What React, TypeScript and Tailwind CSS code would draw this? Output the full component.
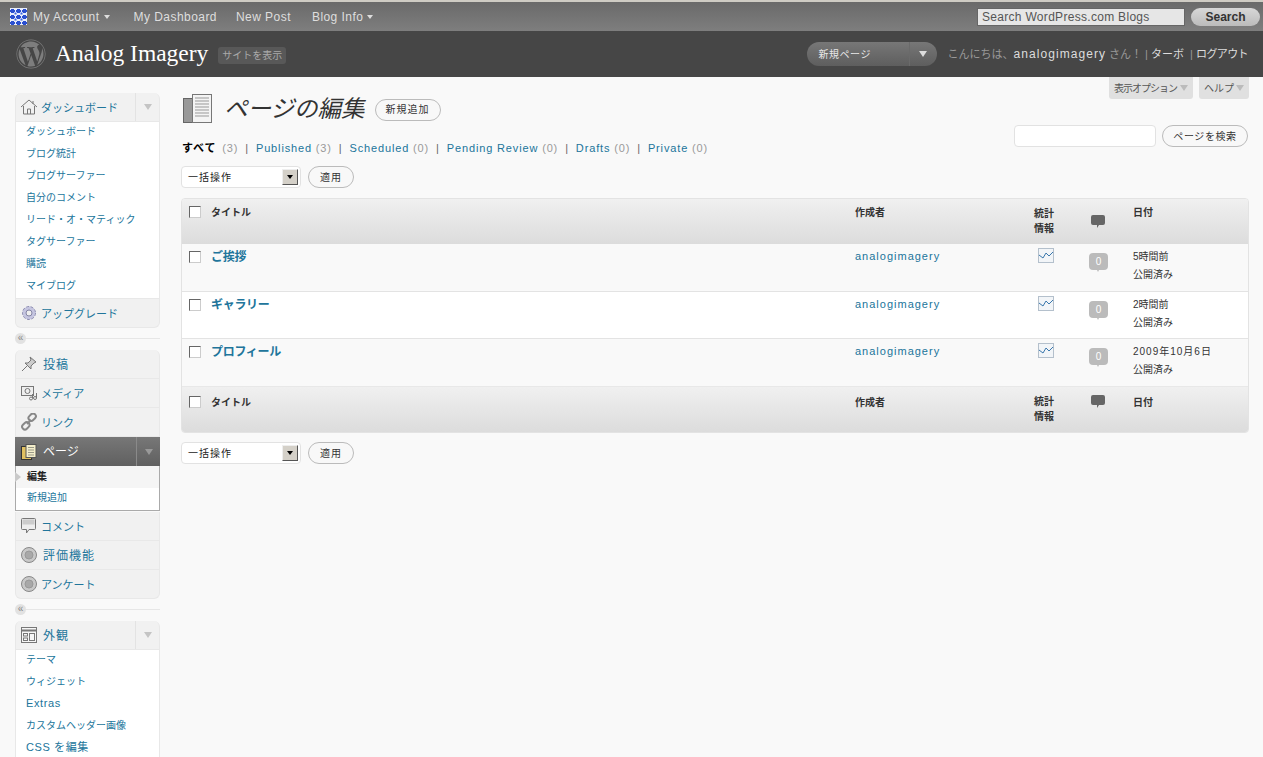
import React from 'react';
import { FaWordpress } from 'react-icons/fa';

const FONT = '"Liberation Sans", "Noto Sans CJK JP", sans-serif';

const Arrow = ({ className = '', small }: { className?: string; small?: boolean }) => (
  <span className={`inline-block w-0 h-0 border-x-transparent ${small ? 'border-x-[3px] border-t-[4px]' : 'border-x-[4px] border-t-[6px]'} ${className}`} />
);

const Gravatar = () => (
  <svg width="17" height="17" viewBox="0 0 17 17" className="shrink-0">
    <rect width="17" height="17" fill="#e8edfb" />
    {[0, 6, 12].map(x => [0, 6, 12].map(y => (
      <path key={`${x}-${y}`} d={`M${x + 1} ${y + 1}h3v1h1v2h-1v1h-3v-1h-1v-2h1z`} fill="#2a4fd0" />
    )))}
    {[3, 9].map(x => [3, 9].map(y => <rect key={`${x}-${y}`} x={x + 1.500} y={y + 1.500} width="2" height="2" fill="#3a62e0" />))}
  </svg>
);

const HomeIcon = () => (
  <svg width="18" height="16" viewBox="0 0 18 16" fill="none" stroke="#777">
    <path d="M1 8 9 1l8 7M3.500 7v8h11V7M7.500 15v-5h3v5M13 2v3" />
  </svg>
);
const GearIcon = () => (
  <svg width="16" height="16" viewBox="0 0 16 16">
    <circle cx="8" cy="8" r="6.500" fill="#c5c5e0" stroke="#8d8db0" strokeDasharray="3 1.500" />
    <circle cx="8" cy="8" r="3" fill="#eee" stroke="#8585a5" />
  </svg>
);
const PinIcon = () => (
  <svg width="16" height="16" viewBox="0 0 16 16" fill="#ccc" stroke="#777">
    <path d="M9 1l6 5-2 1-3 3 0 3-6-6 3 0 3-3zM6 10l-5 5" />
  </svg>
);
const MediaIcon = () => (
  <svg width="16" height="16" viewBox="0 0 16 16" fill="none" stroke="#777">
    <rect x="0.500" y="1.500" width="12" height="9" fill="#eee" />
    <circle cx="6.500" cy="6" r="2.500" />
    <circle cx="10" cy="13.500" r="1.500" />
    <circle cx="14" cy="13" r="1.500" />
    <path d="M11.500 13V9M15.500 13V8" />
  </svg>
);
const LinkIcon = () => (
  <svg width="18" height="18" viewBox="0 0 18 18" fill="none" stroke="#888" strokeWidth="2">
    <rect x="8" y="1.500" width="8" height="5.500" rx="2.700" transform="rotate(-45 12 4)" />
    <rect x="2" y="10" width="8" height="5.500" rx="2.700" transform="rotate(-45 6 13)" />
    <path d="M7 11l4-4" />
  </svg>
);
const PagesIcon = () => (
  <svg width="16" height="16" viewBox="0 0 16 16">
    <rect x="0.500" y="2.500" width="10" height="13" fill="#e0c060" stroke="#333" />
    <rect x="5" y="0.500" width="10" height="13" fill="#f4eecb" stroke="#555" />
    <path d="M7 3.500h6M7 6h6M7 8.500h6M7 11h6" stroke="#998" />
  </svg>
);
const CommentIcon = () => (
  <svg width="15" height="16" viewBox="0 0 15 16">
    <path d="M1.500.500h12a1 1 0 0 1 1 1v9a1 1 0 0 1-1 1H8l-2.500 3.500v-3.500h-4a1 1 0 0 1-1-1v-9a1 1 0 0 1 1-1z" fill="#eee" stroke="#777" />
    <rect x="1.500" y="1.500" width="12" height="5" fill="#ccc" />
  </svg>
);
const DiscIcon = () => (
  <svg width="16" height="16" viewBox="0 0 16 16">
    <circle cx="8" cy="8" r="7.500" fill="#c8c8c8" stroke="#888" />
    <circle cx="8" cy="8" r="4" fill="#a8a8a8" stroke="#999" />
  </svg>
);
const AppearanceIcon = () => (
  <svg width="16" height="16" viewBox="0 0 16 16" fill="none" stroke="#777">
    <rect x="0.500" y="0.500" width="15" height="15" fill="#f6f6f6" />
    <path d="M.500 3.500h15" strokeWidth="2" />
    <rect x="2.500" y="6.500" width="4" height="2.500" />
    <rect x="2.500" y="11" width="4" height="2.500" />
    <rect x="8.500" y="6.500" width="5" height="7" />
  </svg>
);
const StatsIcon = () => (
  <svg width="16" height="15" viewBox="0 0 16 15" fill="none">
    <rect x="0.500" y="0.500" width="15" height="14" fill="#f2f5f8" stroke="#b4c0cc" />
    <path d="M1 7l4 3 3-5 3 3 4-4" stroke="#3b78ad" />
  </svg>
);

const MenuHead = ({ icon, label, arrow, first, last, big }: { icon: React.ReactNode; label: string; arrow?: boolean; first?: boolean; last?: boolean; big?: boolean }) => (
  <div className={`flex h-[29px] items-center bg-[#f1f1f1] border border-[#e8e8e8] border-t-0 ${first ? 'rounded-t-md border-t' : ''} ${last ? 'rounded-b-md' : ''}`}>
    <span className="w-[25px] flex justify-center shrink-0">{icon}</span>
    <span className={`text-[#21759b] mt-[2px] flex-1 ${big ? 'pl-[2px] text-[12px] tracking-[1px]' : 'text-[11px]'}`}>{label}</span>
    {arrow && (
      <span className="w-[24px] h-full flex items-center justify-center border-l border-[#e3e3e3]">
        <Arrow className="border-t-[#c4c4c4]" />
      </span>
    )}
  </div>
);

const SubMenu = ({ items }: { items: string[] }) => (
  <ul className="bg-white border-x border-b border-[#e8e8e8]">
    {items.map(t => (
      <li
        key={t}
        className={`h-[22px] pb-[4px] pl-[10px] flex items-center text-[#21759b] ${/^(Extras|CSS)/.test(t) ? 'text-[11px] tracking-[0.6px]' : 'text-[10px]'}`}
      >
        {t}
      </li>
    ))}
  </ul>
);

const Separator = () => (
  <div className="h-[22px] pb-[2px] flex items-center">
    <span className="w-[11px] h-[11px] rounded-full bg-[#e2e2e2] text-[#888] text-[10px] leading-[9px] text-center shrink-0">«</span>
    <span className="flex-1 h-px bg-[#e6e6e6]" />
  </div>
);

const Sidebar = () => (
  <aside className="w-[145px] shrink-0 pt-[16px]">
    <MenuHead icon={<HomeIcon />} label="ダッシュボード" arrow first />
    <SubMenu items={['ダッシュボード', 'ブログ統計', 'ブログサーファー', '自分のコメント', 'リード・オ・マティック', 'タグサーファー', '購読', 'マイブログ']} />
    <MenuHead icon={<GearIcon />} label="アップグレード" last />
    <Separator />
    <MenuHead icon={<PinIcon />} label="投稿" first big />
    <MenuHead icon={<MediaIcon />} label="メディア" />
    <MenuHead icon={<LinkIcon />} label="リンク" />
    <div className="flex h-[29px] items-center bg-gradient-to-b from-[#777] to-[#606060]">
      <span className="w-[27px] flex justify-center shrink-0"><PagesIcon /></span>
      <span className="text-white text-[12px] flex-1 pl-[1px]">ページ</span>
      <span className="w-[24px] h-full flex items-center justify-center border-l border-[#8a8a8a]">
        <Arrow className="border-t-[#999]" />
      </span>
    </div>
    <ul className="relative border-x border-b border-[#aaa] bg-white mb-[1px]">
      <li className="h-[22px] pb-[2px] pl-[11px] flex items-center text-[10px] font-bold text-[#222] bg-[#f5f5f5]">編集</li>
      <li className="h-[22px] pb-[4px] pl-[11px] flex items-center text-[10px] text-[#21759b]">新規追加</li>
      <span className="absolute -left-px top-[6px] w-0 h-0 border-y-[5px] border-y-transparent border-l-[6px] border-l-[#c9c9c9]" />
    </ul>
    <MenuHead icon={<CommentIcon />} label="コメント" />
    <MenuHead icon={<DiscIcon />} label="評価機能" big />
    <MenuHead icon={<DiscIcon />} label="アンケート" last />
    <Separator />
    <MenuHead icon={<AppearanceIcon />} label="外観" arrow first big />
    <SubMenu items={['テーマ', 'ウィジェット', 'Extras', 'カスタムヘッダー画像', 'CSS を編集']} />
  </aside>
);

const BulkActions = () => (
  <div className="flex items-center gap-[7px]">
    <div className="w-[120px] h-[22px] bg-white border border-[#e2e2e2] rounded-[4px] flex items-center pl-[6px] pr-[2px] text-[10px] text-[#222] tracking-[1px]">
      <span className="flex-1">一括操作</span>
      <span className="w-[16px] h-[16px] bg-[#d4d0c8] border border-t-[#eee] border-l-[#eee] border-r-[#555] border-b-[#555] flex items-center justify-center">
        <Arrow small className="border-t-black" />
      </span>
    </div>
    <button className="w-[46px] h-[22px] bg-[#f8f8f8] border border-[#bbb] rounded-full text-[10px] text-[#333] tracking-[1px]">適用</button>
  </div>
);

const HeadRow = ({ foot }: { foot?: boolean }) => (
  <tr className={`bg-gradient-to-b from-[#f0f0f0] to-[#dcdcdc] align-top text-[10px] font-bold text-[#333] ${foot ? 'h-[46px] border-t border-[#e8e8e8]' : 'h-[45px]'}`}>
    <th className={`pl-[7px] font-normal text-left ${foot ? 'pt-[9px]' : 'pt-[7px]'}`}><span className="block w-[12px] h-[12px] bg-white border border-[#666] border-r-[#ccc] border-b-[#ccc]" /></th>
    <th className={`text-left ${foot ? 'pt-[8px]' : 'pt-[6px]'}`}>タイトル</th>
    <th className={`text-left ${foot ? 'pt-[8px]' : 'pt-[6px]'}`}>作成者</th>
    <th className="pt-[7px] text-left leading-[15px]">統計<br />情報</th>
    <th className="pt-[16px] text-left">
      <svg width="14" height="13" viewBox="0 0 14 13" className={`ml-[7px] ${foot ? '-mt-[8px]' : ''}`}>
        <path d="M2 0h10a2 2 0 0 1 2 2v6a2 2 0 0 1-2 2H8l-2 3v-3H2a2 2 0 0 1-2-2V2a2 2 0 0 1 2-2z" fill="#666" />
      </svg>
    </th>
    <th className={`text-left ${foot ? 'pt-[8px]' : 'pt-[6px]'}`}>日付</th>
  </tr>
);

const rows = [
  { title: 'ご挨拶', date: '5時間前', bg: 'bg-[#f9f9f9] h-[47px]', track: '' },
  { title: 'ギャラリー', date: '2時間前', bg: 'bg-white h-[47px]', track: '' },
  { title: 'プロフィール', date: '2009年10月6日', bg: 'bg-[#f9f9f9] h-[48px]', track: 'tracking-[1px]' },
];

const PostsTable = () => (
  <div className="rounded-[4px] overflow-hidden border border-[#e3e3e3] mt-[10px]">
    <table className="w-full table-fixed border-collapse">
      <colgroup>
        <col className="w-[29px]" />
        <col className="w-[644px]" />
        <col className="w-[179px]" />
        <col className="w-[50px]" />
        <col className="w-[49px]" />
        <col />
      </colgroup>
      <thead><HeadRow /></thead>
      <tbody>
        {rows.map(r => (
          <tr key={r.title} className={`align-top border-t border-[#e3e3e3] first:border-t-0 ${r.bg}`}>
            <td className="pl-[7px] pt-[7px]"><span className="block w-[12px] h-[12px] bg-white border border-[#666] border-r-[#ccc] border-b-[#ccc]" /></td>
            <td className="pt-[4px] text-[12px] tracking-[-0.3px] font-bold text-[#21759b]">{r.title}</td>
            <td className="pt-[4px] text-[11px] tracking-[1px] text-[#21759b]">analogimagery</td>
            <td className="pt-[4px] pl-[4px]"><StatsIcon /></td>
            <td className="pt-[9px] pl-[5px]">
              <span className="relative flex w-[19px] h-[17px] rounded-[4px] bg-[#bbb] text-white text-[10px] items-center justify-center">0
                <span className="absolute left-[8px] -bottom-[2px] w-0 h-0 border-x-[1px] border-x-transparent border-t-[2px] border-t-[#bbb]" />
              </span>
            </td>
            <td className="pt-[4px] text-[10px] leading-[18px] text-[#333]">
              <div className={r.track}>{r.date}</div>
              <div>公開済み</div>
            </td>
          </tr>
        ))}
      </tbody>
      <tfoot><HeadRow foot /></tfoot>
    </table>
  </div>
);

const Main = () => (
  <main className="flex-1 ml-[21px] mr-[14px] relative">
    <div className="absolute right-0 top-0 flex gap-[6px] text-[10px] text-[#555]">
      <span className="h-[22px] w-[84px] bg-[#e0e0e0] rounded-b-[3px] flex items-center justify-center gap-[3px] tracking-[-1px]">表示オプション <Arrow className="border-t-[#bbb]" /></span>
      <span className="h-[22px] w-[50px] bg-[#e0e0e0] rounded-b-[3px] flex items-center justify-center gap-[2px]">ヘルプ <Arrow className="border-t-[#bbb]" /></span>
    </div>
    <div className="flex items-center pt-[6px] h-[59px]">
      <svg width="30" height="32" viewBox="0 0 30 32" className="ml-[2px]">
        <rect x="0.500" y="4.500" width="14" height="24" fill="#999" stroke="#666" />
        <rect x="9.500" y="0.500" width="19" height="28" fill="#f4f4f4" stroke="#777" />
        <path d="M12 4h14M12 7h14M12 10h14M12 13h14M12 16h14M12 19h14M12 22h14" stroke="#999" />
      </svg>
      <h1 className="ml-[11px] text-[23.500px] italic text-[#333]" style={{ fontFamily: '"Liberation Serif", "Noto Sans CJK JP", serif' }}>ページの編集</h1>
      <button className="ml-[10px] w-[66px] h-[22px] bg-[#f8f8f8] border border-[#bbb] rounded-full text-[10px] text-[#333] tracking-[1px]">新規追加</button>
    </div>
    <div className="flex justify-between">
      <ul className="flex pt-[4px] pl-[1px] text-[11px] leading-[17px] tracking-[0.85px] text-[#999]">
        <li><b className="text-black mr-[2px]">すべて</b> (3)<span className="px-[7px] text-[#666]">|</span></li>
        <li><span className="text-[#21759b]">Published</span> (3)<span className="px-[7px] text-[#666]">|</span></li>
        <li><span className="text-[#21759b]">Scheduled</span> (0)<span className="px-[7px] text-[#666]">|</span></li>
        <li><span className="text-[#21759b]">Pending Review</span> (0)<span className="px-[7px] text-[#666]">|</span></li>
        <li><span className="text-[#21759b]">Drafts</span> (0)<span className="px-[7px] text-[#666]">|</span></li>
        <li><span className="text-[#21759b]">Private</span> (0)</li>
      </ul>
      <div className="flex gap-[6px] -mt-[11px] mr-[1px]">
        <span className="w-[142px] h-[22px] bg-white border border-[#e2e2e2] rounded-[4px]" />
        <button className="w-[86px] h-[22px] bg-[#f8f8f8] border border-[#bbb] rounded-full text-[10px] text-[#333] tracking-[0.6px]">ページを検索</button>
      </div>
    </div>
    <div className="mt-[9px]"><BulkActions /></div>
    <PostsTable />
    <div className="mt-[9px]"><BulkActions /></div>
  </main>
);

export default function App() {
  return (
    <div className="h-[757px] overflow-hidden bg-[#f9f9f9]" style={{ fontFamily: FONT }}>
      <div className="h-[2px] bg-[#cfccc4]" />
      <div className="h-[29px] bg-gradient-to-b from-[#6a6a6a] to-[#7e7e7e] flex items-center pl-[10px] pr-[3px] text-[12px] tracking-[0.45px] text-[#dedede]">
        <Gravatar />
        <span className="ml-[6px]">My Account</span>
        <Arrow small className="ml-[4px] border-t-[#ddd]" />
        <span className="ml-[24px]">My Dashboard</span>
        <span className="ml-[19px]">New Post</span>
        <span className="ml-[21px]">Blog Info</span>
        <Arrow small className="ml-[4px] border-t-[#ddd]" />
        <input readOnly value="Search WordPress.com Blogs" className="ml-auto w-[208px] h-[18px] bg-[#e6e6e6] border border-[#666] px-[4px] text-[12px] tracking-[0.3px] text-[#555]" />
        <button className="ml-[6px] w-[69px] h-[18px] rounded-full bg-gradient-to-b from-[#d8d8d8] to-[#bbb] text-[12px] tracking-normal font-bold text-[#333]">Search</button>
      </div>
      <header className="h-[46px] bg-[#464646] flex items-center pl-[16px] pr-[15px]">
        <FaWordpress size={30} className="text-[#7d7d7d]" />
        <span className="ml-[9px] text-[23.500px] text-white" style={{ fontFamily: '"Liberation Serif", serif' }}>Analog Imagery</span>
        <span className="ml-[10px] w-[68px] h-[17px] mt-[2px] rounded-[3px] bg-[#585858] text-[#aaa] text-[10px] flex items-center justify-center">サイトを表示</span>
        <div className="ml-auto flex items-center w-[130px] h-[24px] rounded-full bg-gradient-to-b from-[#777] to-[#5e5e5e] text-[10px] text-[#e8e8e8]">
          <span className="flex-1 pl-[12px] tracking-[0.5px]">新規ページ</span>
          <span className="w-[28px] h-full flex items-center justify-center border-l border-[#6a6a6a]">
            <Arrow className="border-t-[#ddd]" />
          </span>
        </div>
        <div className="ml-[11px] text-[11px] text-[#999]">
          こんにちは、<span className="text-[#ddd] text-[12px] tracking-[1.05px]">analogimagery</span> さん！ | <span className="text-[#ddd] mr-[3px]">ターボ</span> | <span className="text-[#ddd] tracking-[-0.6px]">ログアウト</span>
        </div>
      </header>
      <div className="flex pl-[15px]">
        <Sidebar />
        <Main />
      </div>
    </div>
  );
}
